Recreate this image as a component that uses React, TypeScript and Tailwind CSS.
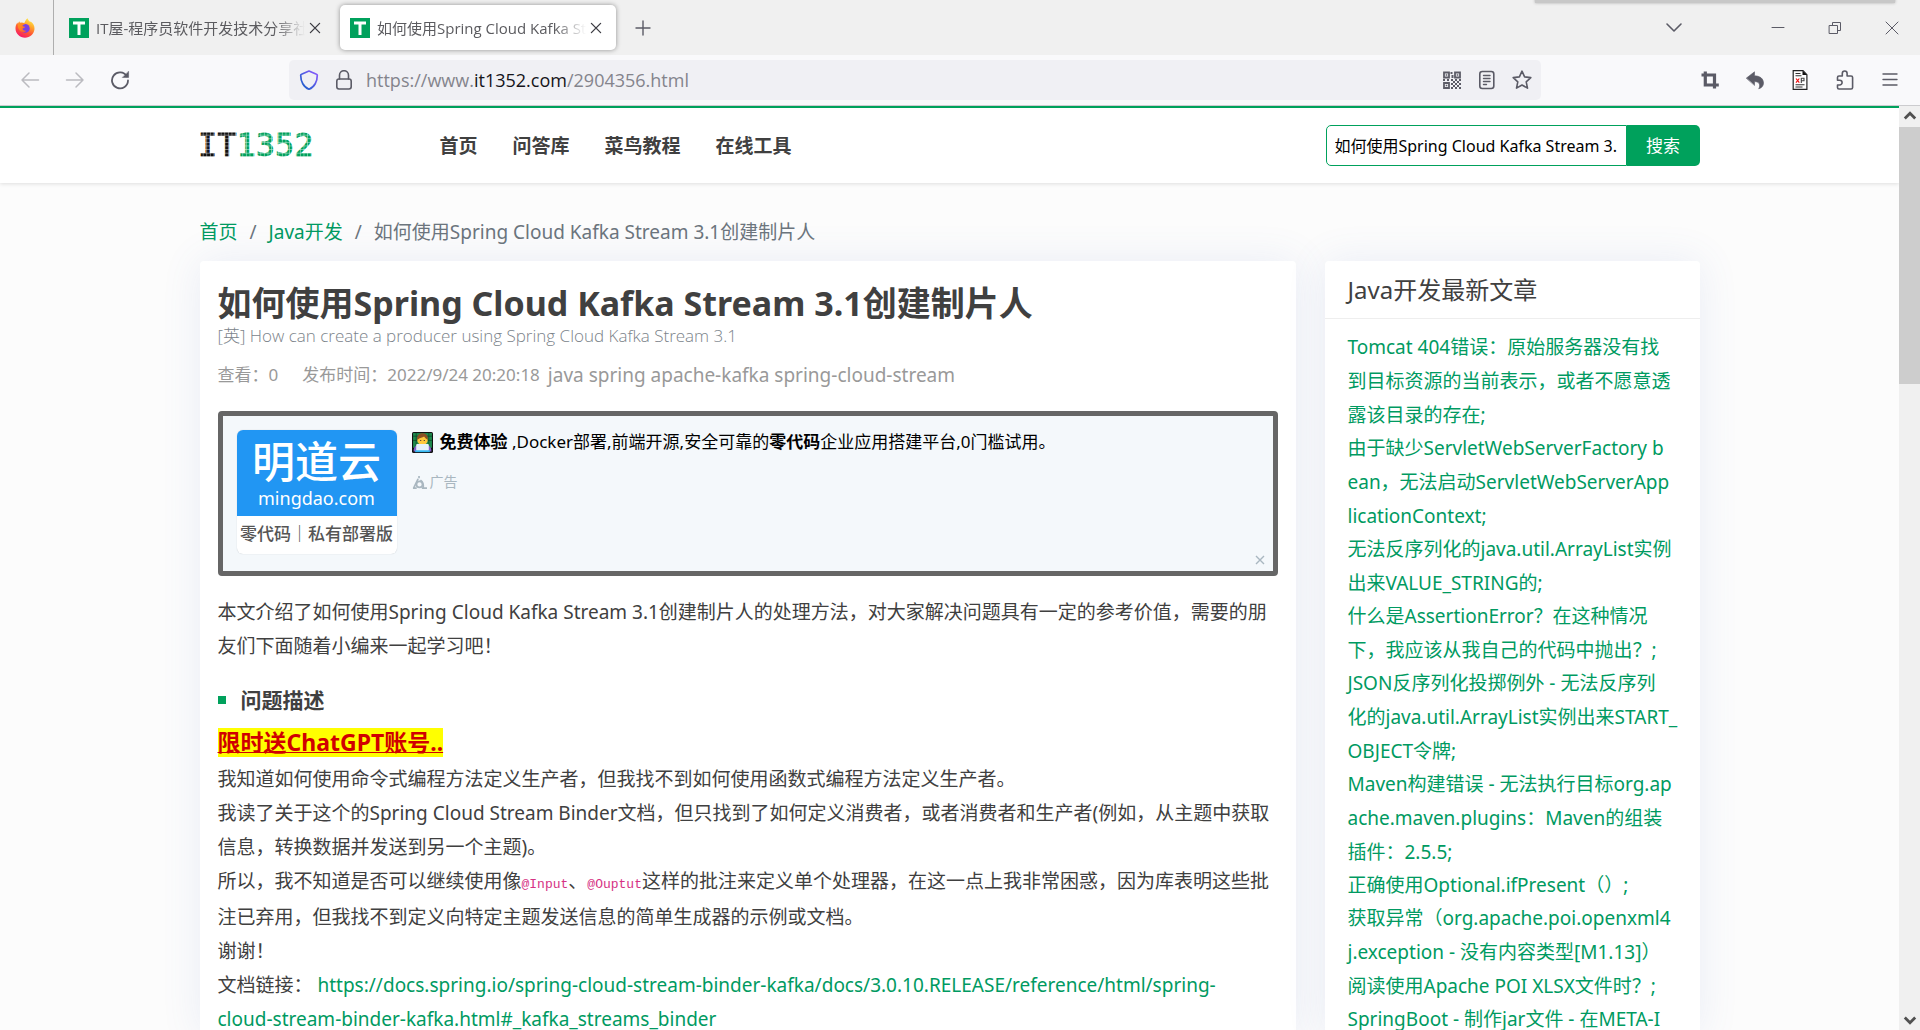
import { useState, type ReactNode } from "react";
import clsx from "clsx";

const NAV_LINKS = ["首页", "问答库", "菜鸟教程", "在线工具"];

const LATEST: string[][] = [
  ["Tomcat 404错误：原始服务器没有找", "到目标资源的当前表示，或者不愿意透", "露该目录的存在;"],
  ["由于缺少ServletWebServerFactory b", "ean，无法启动ServletWebServerApp", "licationContext;"],
  ["无法反序列化的java.util.ArrayList实例", "出来VALUE_STRING的;"],
  ["什么是AssertionError？在这种情况", "下，我应该从我自己的代码中抛出？;"],
  ["JSON反序列化投掷例外 - 无法反序列", "化的java.util.ArrayList实例出来START_", "OBJECT令牌;"],
  ["Maven构建错误 - 无法执行目标org.ap", "ache.maven.plugins：Maven的组装", "插件：2.5.5;"],
  ["正确使用Optional.ifPresent（）;"],
  ["获取异常（org.apache.poi.openxml4", "j.exception - 没有内容类型[M1.13]）", "阅读使用Apache POI XLSX文件时？;"],
  ["SpringBoot - 制作jar文件 - 在META-I"],
];

function Icon({ children, className = "size-5 text-[#5b5b66]" }: { children: ReactNode; className?: string }) {
  return (
    <svg viewBox="0 0 20 20" className={clsx("shrink-0", className)} fill="none" stroke="currentColor" strokeWidth="1.6" strokeLinecap="round" strokeLinejoin="round" aria-hidden="true">
      {children}
    </svg>
  );
}

function IconButton({ label, children, className = "w-5" }: { label: string; children: ReactNode; className?: string }) {
  return (
    <button type="button" aria-label={label} className={clsx("flex h-8 shrink-0 items-center justify-center", className)}>
      {children}
    </button>
  );
}

function FirefoxIcon() {
  return (
    <svg viewBox="0 0 20 20" className="size-5" aria-hidden="true">
      <defs>
        <linearGradient id="fox" x1="0.8" y1="0" x2="0.3" y2="1">
          <stop offset="0" stopColor="#fff44f" />
          <stop offset="0.35" stopColor="#ffa52b" />
          <stop offset="0.65" stopColor="#ff5634" />
          <stop offset="1" stopColor="#f5156c" />
        </linearGradient>
        <linearGradient id="foxHead" x1="0" y1="0" x2="1" y2="1">
          <stop offset="0" stopColor="#ff9a1f" />
          <stop offset="1" stopColor="#ff5a2a" />
        </linearGradient>
      </defs>
      <path d="M12.6.3c.3 1.500 1.300 2.300 2.500 3.600l.6-.4c2.600 1.800 4 4.400 3.800 7.600-.4 5-4.500 8.600-9.500 8.600S.6 15.900.5 10.800C.4 8.200 1.100 6.100 2.600 4.400L2.800 6l1.400-2.700.8 1.500c1.500-.6 3-.5 4.300.1 1-1.600 1.400-3.400 3.300-4.600z" fill="url(#fox)" />
      <circle cx="10.300" cy="10.400" r="4.400" fill="#7a3fe4" />
      <path d="M3.200 6c2-1.300 4.600-1.200 6.600.1-.8.700-2 .8-2.300 1.600.2.900 1.900.7 2.700 1.100-.4 1.300-2 1.200-2.700 2 .4 1.600 2.300 2.300 4 1.600-1.200 1.900-4.600 2.300-6.600.2C3.200 10.900 2.500 8.300 3.200 6z" fill="url(#foxHead)" />
    </svg>
  );
}

function SiteIcon() {
  return (
    <svg viewBox="0 0 20 20" className="size-5 shrink-0" aria-hidden="true">
      <rect width="20" height="20" fill="#00a15c" />
      <path d="M4 5h12M10 5v12" stroke="#fff" strokeWidth="3" />
    </svg>
  );
}

function CloseIcon() {
  return (
    <Icon className="size-5 text-[#3b3b42]">
      <path d="M5.400 5.400l9.200 9.200M14.600 5.400l-9.200 9.200" strokeWidth="1.300" />
    </Icon>
  );
}

function Tab({ title, active }: { title: string; active?: boolean }) {
  return (
    <div className={clsx("flex h-[45px] w-[276px] items-center rounded-[5px] px-[10px]", active && "bg-white shadow-[0_0_5px_rgba(0,0,0,0.4)]")}>
      <SiteIcon />
      <span className="ml-[7px] w-[209px] overflow-hidden whitespace-nowrap text-[15px] leading-5 text-[#5b5b5f] [mask-image:linear-gradient(to_right,black_85%,transparent)]">
        {title}
      </span>
      <IconButton label="关闭标签页">
        <CloseIcon />
      </IconButton>
    </div>
  );
}

function TabStrip() {
  return (
    <div className="relative flex h-[55px] shrink-0 bg-[#f0f0f0]">
      <div className="absolute -top-1 right-[25px] h-[7px] w-[360px] bg-[#c8c8c8] shadow-[0_0_3px_#aaa]" />
      <div className="flex w-[54px] items-center justify-center border-r border-[#aeaeae] pr-1">
        <FirefoxIcon />
      </div>
      <div className="flex items-center gap-[5px] pl-[5px]">
        <Tab title="IT屋-程序员软件开发技术分享社区" />
        <Tab title="如何使用Spring Cloud Kafka Stream 3.1创建制片人" active />
      </div>
      <div className="flex items-center pl-[17px]">
        <IconButton label="新建标签页">
          <Icon>
            <path d="M10 3v14M3 10h14" strokeWidth="1.400" />
          </Icon>
        </IconButton>
      </div>
      <div className="ml-auto flex items-center pr-[18px]">
        <IconButton label="列出所有标签页" className="mr-[84px] w-5">
          <Icon>
            <path d="M3 6l7 7 7-7" />
          </Icon>
        </IconButton>
        <div className="flex items-center gap-[37px]">
          <IconButton label="最小化">
            <Icon>
              <path d="M4 9.500h12" strokeWidth="1" />
            </Icon>
          </IconButton>
          <IconButton label="还原">
            <Icon>
              <path d="M4.500 7.500h8v8h-8zM7.500 7.500v-3h8v8h-3" strokeWidth="1" strokeLinejoin="miter" />
            </Icon>
          </IconButton>
          <IconButton label="关闭">
            <Icon>
              <path d="M4 4l12 12M16 4L4 16" strokeWidth="1" />
            </Icon>
          </IconButton>
        </div>
      </div>
    </div>
  );
}

function Toolbar() {
  return (
    <div className="flex h-[51px] shrink-0 items-center border-b border-[#cccccf] bg-[#f9f9fb]">
      <div className="flex w-[289px] shrink-0 gap-[25px] pl-5">
        <IconButton label="后退">
          <Icon className="size-5 text-[#bbbbc0]">
            <path d="M18.500 10H2M9 3l-7 7 7 7" strokeWidth="1.500" />
          </Icon>
        </IconButton>
        <IconButton label="前进">
          <Icon className="size-5 text-[#bbbbc0]">
            <path d="M1.500 10H18M11 3l7 7-7 7" strokeWidth="1.500" />
          </Icon>
        </IconButton>
        <IconButton label="刷新">
          <Icon>
            <path d="M16.800 6.200A8 8 0 1 0 18 10.500" strokeWidth="1.800" />
            <path d="M18.600 1.500v6h-6z" fill="currentColor" strokeWidth="0.500" />
          </Icon>
        </IconButton>
      </div>

      <div className="flex h-10 min-w-0 flex-1 items-center rounded-[5px] bg-[#f0f0f4] pl-[10px] pr-[9px]">
        <svg viewBox="0 0 20 20" className="size-5 shrink-0" fill="none" aria-hidden="true">
          <defs>
            <linearGradient id="shield" x1="0" y1="1" x2="1" y2="0">
              <stop offset="0.200" stopColor="#2a5fd0" />
              <stop offset="1" stopColor="#9059ff" />
            </linearGradient>
          </defs>
          <path d="M10 1L17.500 4.200c.5.200.8.600.8 1.100 0 6-2.800 12-8.300 13.900C4.500 17.300 1.700 11.300 1.700 5.300c0-.5.3-.9.8-1.100z" stroke="url(#shield)" strokeWidth="1.700" strokeLinejoin="round" />
        </svg>
        <Icon className="ml-[15px] size-5 text-[#5b5b66]">
          <rect x="2.800" y="9" width="14.400" height="10" rx="2.200" />
          <path d="M5.500 9V5.200a4.500 4.500 0 0 1 9 0V9" />
        </Icon>
        <div className="ml-3 flex-1 whitespace-nowrap text-[18px] leading-6 text-[#84848c]">
          https://www.<span className="text-[#15141a]">it1352.com</span>/2904356.html
        </div>
        <div className="flex gap-[15px]">
          <IconButton label="二维码">
            <svg viewBox="0 0 20 20" className="size-5" aria-hidden="true">
              <path d="M2 2.500h5v5H2zM13 2.500h5v5h-5zM2 13h5v5H2z" fill="none" stroke="#5b5b66" strokeWidth="1.800" />
              <path d="M3.700 4.200h1.600v1.600H3.700zM14.700 4.200h1.600v1.600h-1.600zM3.700 14.700h1.600v1.600H3.700zM8.500 2h2v2h-2zM9.500 5h2v3h-2zM1 9h2v2H1zM5 9h2v2H5zM9 9h2v2H9zM13 9h2v2h-2zM17 9h2v2h-2zM11 11h2v2h-2zM15 11h2v2h-2zM9 13h2v2H9zM13 13h2v2h-2zM17 13h2v2h-2zM11 15h2v2h-2zM15 15h2v2h-2zM9 17h2v2H9zM13 17h2v2h-2zM17 17h2v2h-2z" fill="#5b5b66" />
            </svg>
          </IconButton>
          <IconButton label="阅读模式">
            <Icon>
              <rect x="2.800" y="1.500" width="14" height="17" rx="2.500" />
              <path d="M6.500 5.500h6.500M6.500 8.500h6.500M6.500 11.500h6.500M6.500 14.500h3" strokeWidth="1.400" />
            </Icon>
          </IconButton>
          <IconButton label="收藏">
            <Icon>
              <path d="M10 1.200l2.600 5.700 6.200.7-4.600 4.200 1.300 6.300L10 15l-5.500 3.100 1.300-6.300L1.200 7.600l6.200-.7z" />
            </Icon>
          </IconButton>
        </div>
      </div>

      <div className="flex w-[379px] shrink-0 justify-end gap-[25px] pr-5">
        <IconButton label="截图">
          <Icon>
            <path d="M1.500 5h13v13.500M5.300 1.500V15h13.500" strokeWidth="3.200" strokeLinecap="butt" strokeLinejoin="miter" />
          </Icon>
        </IconButton>
        <IconButton label="撤销">
          <Icon>
            <path d="M1.500 8L9.500 1.800v4c5.500 0 9 3 9 7.200 0 2.800-1.800 5-4.800 5.800 2-3.500 1-7.200-4.200-7.200v3.500z" fill="currentColor" strokeWidth="0.600" />
          </Icon>
        </IconButton>
        <IconButton label="XPath">
          <svg viewBox="0 0 20 20" className="size-5" aria-hidden="true">
            <path d="M3.200.7h9.800l3.900 4v14.600h-13.700z" fill="#fff" stroke="#222" strokeWidth="1.200" />
            <path d="M12.500.7v4.300h4.400z" fill="#111" />
            <path d="M5.500 3.500h5M5.500 5.800h6M5.500 14.800h9M5.500 17h7" stroke="#333" strokeWidth="1.100" />
            <path d="M6 8.500l3.300 4.200M9.300 8.500l-3.300 4.200" stroke="#e11" strokeWidth="1.200" />
            <path d="M11.300 13V8.300h2.700v2.400h-2.700" fill="none" stroke="#444" strokeWidth="1.100" />
          </svg>
        </IconButton>
        <IconButton label="扩展">
          <Icon>
            <path d="M2.500 9V7.500A1.500 1.500 0 0 1 4 6h3.300V3.400a2.400 2.400 0 0 1 4.800 0V6h4a1.500 1.500 0 0 1 1.500 1.500v10a1.500 1.500 0 0 1-1.500 1.500H4a1.500 1.500 0 0 1-1.500-1.500V15h2.200a2.400 2.400 0 0 0 0-4.800H2.500z" />
          </Icon>
        </IconButton>
        <IconButton label="菜单">
          <Icon>
            <path d="M3 4h14M3 9.500h14M3 15h14" strokeWidth="1.400" />
          </Icon>
        </IconButton>
      </div>
    </div>
  );
}

function Logo() {
  return (
    <a href="#" aria-label="IT1352" className="w-[240px]">
      <svg viewBox="0 0 116 28" className="h-7 w-[116px] font-['DejaVu_Sans_Mono',monospace]">
        <defs>
          <pattern id="mesh" width="3.600" height="3.600" patternUnits="userSpaceOnUse">
            <path d="M0 3.300h3.600M3.300 0v3.600" stroke="#fff" strokeWidth="0.600" opacity="0.800" />
          </pattern>
        </defs>
        <text x="-2" y="24" fontSize="32" fill="#111" stroke="#111" strokeWidth="0.800">
          IT<tspan fill="#00a15c" stroke="#00a15c">1352</tspan>
        </text>
        <rect width="116" height="28" fill="url(#mesh)" />
      </svg>
    </a>
  );
}

function SiteHeader() {
  const [keyword, setKeyword] = useState("如何使用Spring Cloud Kafka Stream 3.");

  return (
    <header className="border-t-2 border-[#00a15c] bg-white shadow-[0_1px_4px_rgba(0,0,0,0.12)]">
      <div className="mx-auto flex h-[75px] max-w-[1500px] items-center">
        <Logo />
        <nav className="flex flex-1 gap-[35px] text-[19px] font-bold text-[#404040]">
          {NAV_LINKS.map((item) => (
            <a key={item} href="#">{item}</a>
          ))}
        </nav>
        <form className="flex h-[41px] w-[374px]" onSubmit={(e) => e.preventDefault()}>
          <input
            aria-label="搜索"
            value={keyword}
            onChange={(e) => setKeyword(e.target.value)}
            className="min-w-0 flex-1 rounded-l-[5px] border border-[#00a15c] bg-white px-2 text-[16px] text-black outline-none"
          />
          <button type="submit" className="w-[73px] rounded-r-[5px] bg-[#00a15c] text-[17px] text-white">搜索</button>
        </form>
      </div>
    </header>
  );
}

function CoderEmoji() {
  return (
    <svg viewBox="0 0 20 20" className="size-[21px] shrink-0" aria-hidden="true">
      <rect width="20" height="20" rx="1.500" fill="#111" />
      <rect x="1" y="1" width="18" height="14" fill="#1f8a4c" />
      <path d="M1 4h18M1 8h18M4 1v12M16 1v12" stroke="#0c4527" strokeWidth="0.700" />
      <path d="M1.500 18.500c0-5 3-6.500 8.500-6.500s8.500 1.500 8.500 6.500z" fill="#8660c9" />
      <circle cx="10" cy="7.500" r="5" fill="#ffc83d" />
      <path d="M5 7.500C4.400 3.500 6.500 1.200 10 1.200s5.600 2.300 5 6.300C13.500 6.300 12 5.600 11.500 4.400 10 5.500 7.500 5.700 5 7.500z" fill="#8d5024" />
      <path d="M8.300 7.500v1M11.700 7.500v1" stroke="#402a32" strokeWidth="1" />
      <rect x="4" y="11.500" width="12" height="6.500" rx="0.800" fill="#e6f1fa" />
      <path d="M3 18.300h14" stroke="#35b8f1" strokeWidth="1.800" />
    </svg>
  );
}

function Sponsor() {
  return (
    <section aria-label="广告" className="relative mt-5 flex h-[165px] rounded border-[5px] border-[#666] bg-[#f4f8fb] pl-[14px] pt-[14px]">
      <a href="#" className="flex h-[124px] w-40 shrink-0 flex-col overflow-hidden rounded-md bg-white shadow-[0_0_1px_#b5bdc4]">
        <span className="flex h-[86px] flex-col items-center bg-[#2196f3] text-white">
          <span className="mt-2 text-[43px] font-medium leading-[48px]">明道云</span>
          <span className="text-[18px] leading-6">mingdao.com</span>
        </span>
        <span className="whitespace-nowrap text-center text-[17px] font-medium leading-9 text-[#555]">零代码｜私有部署版</span>
      </a>
      <div className="ml-[15px]">
        <p className="flex items-center gap-[7px] text-[17px] leading-6 text-black">
          <CoderEmoji />
          <span>
            <b>免费体验</b> ,Docker部署,前端开源,安全可靠的<b>零代码</b>企业应用搭建平台,0门槛试用。
          </span>
        </p>
        <p className="mt-[18px] flex items-center gap-[3px] text-[14px] leading-5 text-[#a9b7c0]">
          <svg viewBox="0 0 16 16" className="size-[15px]" fill="none" stroke="currentColor" strokeWidth="1.800" aria-hidden="true">
            <path d="M7.500 1v2.500M2 13.500L6.500 4M1 14h4M10.500 14H16M9 5.500c3 2 3.500 5 3 8.500" />
            <circle cx="8" cy="10" r="3.200" />
          </svg>
          广告
        </p>
      </div>
      <button type="button" aria-label="关闭广告" className="absolute bottom-[5px] right-[7px] text-[#a9b7c0]">
        <svg viewBox="0 0 12 12" className="size-3" stroke="currentColor" strokeWidth="1.400" aria-hidden="true">
          <path d="M2 2l8 8M10 2l-8 8" />
        </svg>
      </button>
    </section>
  );
}

function Code({ children }: { children: ReactNode }) {
  return <code className="font-['Liberation_Mono',monospace] text-[13px] leading-[30px] text-[#d63384]">{children}</code>;
}

function Article() {
  return (
    <article className="min-w-0 flex-1 rounded bg-white px-[18px] pt-[22px] shadow-[0_0_40px_rgba(82,110,190,0.11)]">
      <h1 className="text-[34px] font-bold leading-10 text-[#404040]">如何使用Spring Cloud Kafka Stream 3.1创建制片人</h1>
      <p className="font-['Open_Sans','Noto_Sans_CJK_SC',sans-serif] text-[17px] font-light leading-[26px] text-[#7b838a]">[英] How can create a producer using Spring Cloud Kafka Stream 3.1</p>
      <p className="mt-[10px] flex items-center text-[17px] leading-8 text-[#999]">
        <span>查看：0</span>
        <span className="ml-6">发布时间：2022/9/24 20:20:18</span>
        <span className="ml-2 text-[19px]">java spring apache-kafka spring-cloud-stream</span>
      </p>

      <Sponsor />

      <p className="mt-[19px]">
        本文介绍了如何使用Spring Cloud Kafka Stream 3.1创建制片人的处理方法，对大家解决问题具有一定的参考价值，需要的朋友们下面随着小编来一起学习吧！
      </p>

      <h2 className="mt-5 flex items-center gap-[15px] text-[21px] font-bold">
        <span className="size-2 bg-[#00a15c]" />
        问题描述
      </h2>

      <p className="mt-[11px] flex h-[34px] items-start">
        <a href="#" className="bg-[#ff0] text-[23px] font-bold leading-[29px] text-[#d00000] underline decoration-1">限时送ChatGPT账号..</a>
      </p>
      <p>我知道如何使用命令式编程方法定义生产者，但我找不到如何使用函数式编程方法定义生产者。</p>
      <p>我读了关于这个的Spring Cloud Stream Binder文档，但只找到了如何定义消费者，或者消费者和生产者(例如，从主题中获取信息，转换数据并发送到另一个主题)。</p>
      <p>
        所以，我不知道是否可以继续使用像<Code>@Input</Code>、<Code>@Ouptut</Code>这样的批注来定义单个处理器，在这一点上我非常困惑，因为库表明这些批注已弃用，但我找不到定义向特定主题发送信息的简单生成器的示例或文档。
      </p>
      <p>谢谢！</p>
      <p>
        文档链接：{" "}
        <a href="#" className="text-[#009a61]">
          https://docs.spring.io/spring-cloud-stream-binder-kafka/docs/3.0.10.RELEASE/reference/html/spring-
          <br />
          cloud-stream-binder-kafka.html#_kafka_streams_binder
        </a>
      </p>
    </article>
  );
}

function Sidebar() {
  return (
    <aside className="w-[375px] shrink-0 rounded bg-white shadow-[0_0_40px_rgba(82,110,190,0.11)]">
      <h2 className="border-b border-[#eee] px-[23px] pb-[11px] pt-3 text-2xl leading-[34px]">Java开发最新文章</h2>
      <ul className="-space-y-px px-[23px] pt-[11px]">
        {LATEST.map((lines) => (
          <li key={lines[0]}>
            <a href="#" className="text-[#009a61]">
              {lines.map((line) => (
                <span key={line} className="block whitespace-nowrap">{line}</span>
              ))}
            </a>
          </li>
        ))}
      </ul>
    </aside>
  );
}

function Scrollbar() {
  return (
    <div className="flex w-[21px] shrink-0 flex-col items-center bg-[#f0f0f0]" aria-hidden="true">
      <Icon className="my-px h-[19px] w-4 text-[#505050]">
        <path d="M3.500 12.500L10 6l6.500 6.500" strokeWidth="3.500" strokeLinecap="butt" strokeLinejoin="miter" />
      </Icon>
      <div className="h-[257px] w-full bg-[#cdcdcd]" />
      <Icon className="mb-px mt-auto h-[19px] w-4 text-[#505050]">
        <path d="M3.500 7.500L10 14l6.500-6.500" strokeWidth="3.500" strokeLinecap="butt" strokeLinejoin="miter" />
      </Icon>
    </div>
  );
}

export default function App() {
  return (
    <div className="flex h-screen flex-col overflow-hidden font-['Open_Sans','Noto_Sans_CJK_SC',sans-serif]">
      <TabStrip />
      <Toolbar />
      <div className="flex min-h-0 flex-1">
        <div className="min-w-0 flex-1 overflow-hidden bg-[#fcfcfc] font-['Noto_Sans','Noto_Sans_CJK_SC',sans-serif] text-[19px] leading-[34px] text-[#404040]">
          <SiteHeader />
          <main className="mx-auto max-w-[1500px]">
            <nav aria-label="面包屑" className="flex gap-3 pb-3 pt-8 text-[#6c757d]">
              <a href="#" className="text-[#009a61]">首页</a>
              <span>/</span>
              <a href="#" className="text-[#009a61]">Java开发</a>
              <span>/</span>
              <span>如何使用Spring Cloud Kafka Stream 3.1创建制片人</span>
            </nav>
            <div className="flex gap-[29px]">
              <Article />
              <Sidebar />
            </div>
          </main>
        </div>
        <Scrollbar />
      </div>
    </div>
  );
}
